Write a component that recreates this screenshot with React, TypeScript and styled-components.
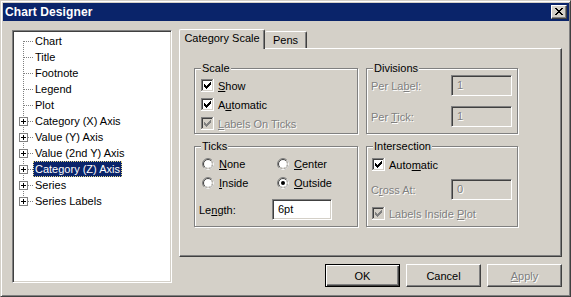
import React from "react";
import styled, { createGlobalStyle, css } from "styled-components";

const face = "#d4d0c8";
const shadow = "#808080";
const dark = "#404040";
const navy = "#0a246a";

const GlobalStyle = createGlobalStyle`
  html, body {
    margin: 0;
    padding: 0;
    background: ${face};
  }
  body {
    font-family: "Liberation Sans", Arial, sans-serif;
    font-size: 11px;
    color: #000;
  }
  * {
    box-sizing: border-box;
  }
`;

const disabledText = css`
  color: ${shadow};
  text-shadow: 1px 1px 0 #fff;
`;

const Window = styled.div`
  width: 571px;
  height: 297px;
  background: ${face};
  border: 1px solid;
  border-color: ${face} ${dark} ${dark} ${face};
  box-shadow: inset 1px 1px 0 #fff, inset -1px -1px 0 ${shadow};
  padding: 2px 1px 2px 2px;
  display: flex;
  flex-direction: column;
  overflow: hidden;
`;

const TitleBar = styled.div`
  height: 18px;
  background: ${navy};
  color: #fff;
  display: flex;
  align-items: center;
  justify-content: space-between;
  padding: 0 2px 0 2px;
`;

const Title = styled.span`
  font-weight: bold;
  font-size: 12px;
  letter-spacing: 0.1px;
`;

const CloseButton = styled.div`
  width: 16px;
  height: 14px;
  background: ${face};
  border: 1px solid;
  border-color: #fff ${dark} ${dark} #fff;
  box-shadow: inset -1px -1px 0 ${shadow};
  display: flex;
  align-items: center;
  justify-content: center;
  padding: 0 1px 1px 0;
`;

const Body = styled.div`
  display: flex;
  gap: 7px;
  padding: 8px 0 0 9px;
`;

const Tree = styled.div`
  margin-top: 1px;
  width: 160px;
  height: 253px;
  background: #fff;
  border: 1px solid;
  border-color: ${shadow} #fff #fff ${shadow};
  box-shadow: inset 1px 1px 0 ${dark}, inset -1px -1px 0 ${face};
  padding: 2px 1px;
`;

const TreeRow = styled.div`
  display: flex;
  height: 16px;
`;

const TreeLabel = styled.span<{ $selected?: boolean }>`
  line-height: 14px;
  padding: 0 1px;
  border: 1px dotted transparent;
  white-space: nowrap;
  ${(p) =>
    p.$selected &&
    css`
      background: ${navy};
      color: #fff;
      border-color: #e8dc8a;
    `}
`;

const RightColumn = styled.div`
  width: 383px;
  display: flex;
  flex-direction: column;
`;

const TabStrip = styled.div`
  height: 19px;
  display: flex;
  align-items: flex-end;
  position: relative;
  z-index: 1;
`;

const Tab = styled.div<{ $active?: boolean; $width: number }>`
  width: ${(p) => p.$width}px;
  background: ${face};
  border-top: 1px solid #fff;
  border-right: 1px solid ${dark};
  box-shadow: inset -1px 0 0 ${shadow};
  border-radius: 2px 2px 0 0;
  text-align: center;
  ${(p) =>
    p.$active
      ? css`
          height: 20px;
          margin-bottom: -1px;
          border-left: 1px solid #fff;
          line-height: 17px;
        `
      : css`
          height: 17px;
          line-height: 16px;
        `}
`;

const TabPanel = styled.div`
  height: 209px;
  border: 1px solid;
  border-color: #fff ${dark} ${dark} #fff;
  box-shadow: inset -1px -1px 0 ${shadow};
  padding: 13px 0 0 14px;
  display: grid;
  grid-template-columns: 164px 152px;
  grid-template-rows: 72px 87px;
  column-gap: 8px;
  row-gap: 6px;
  align-content: start;
`;

const Group = styled.fieldset<{ $top: number }>`
  margin: 0;
  min-width: 0;
  border: 1px solid ${shadow};
  box-shadow: 1px 1px 0 #fff, inset 1px 1px 0 #fff;
  padding: ${(p) => p.$top}px 4px 0 4px;
  display: flex;
  flex-direction: column;
`;

const Legend = styled.legend`
  margin-left: 2px;
  padding: 0 1px;
  line-height: 13px;
  background: ${face};
`;

const Stack = styled.div<{ $gap: number; $indent?: number }>`
  display: flex;
  flex-direction: column;
  gap: ${(p) => p.$gap}px;
  margin-left: ${(p) => p.$indent ?? 0}px;
`;

const OptionRow = styled.label<{ $disabled?: boolean }>`
  display: flex;
  align-items: center;
  gap: 4px;
  height: 13px;
  white-space: nowrap;
  ${(p) => p.$disabled && disabledText}
`;

const RadioGrid = styled.div`
  display: grid;
  grid-template-columns: 75px 75px;
  row-gap: 7px;
  margin-left: 3px;
`;

const RadioRow = styled.label`
  display: flex;
  align-items: center;
  gap: 5px;
  height: 12px;
  white-space: nowrap;
`;

const FieldRow = styled.div<{ $labelWidth?: number }>`
  display: flex;
  align-items: center;
  height: 21px;
  justify-content: ${(p) => (p.$labelWidth ? "flex-start" : "space-between")};
  padding-right: ${(p) => (p.$labelWidth ? 0 : 1)}px;
  & > span:first-child {
    width: ${(p) => (p.$labelWidth ? `${p.$labelWidth}px` : "auto")};
  }
`;

const FieldLabel = styled.span<{ $disabled?: boolean }>`
  ${(p) => p.$disabled && disabledText}
`;

const TextBox = styled.input<{ $width: number }>`
  width: ${(p) => p.$width}px;
  height: 21px;
  margin: 0;
  font: 11px "Liberation Sans", Arial, sans-serif;
  color: #000;
  background: #fff;
  border: 1px solid;
  border-color: ${shadow} #fff #fff ${shadow};
  box-shadow: inset 1px 1px 0 ${dark}, inset -1px -1px 0 ${face};
  padding: 0 0 1px 5px;
  outline: none;
  &:disabled {
    background: ${face};
    ${disabledText}
    opacity: 1;
  }
`;

const ButtonRow = styled.div`
  display: flex;
  justify-content: flex-end;
  gap: 6px;
  margin-top: 7px;
`;

const Button = styled.button<{ $default?: boolean }>`
  width: 75px;
  height: 23px;
  padding: 0;
  font: 11px "Liberation Sans", Arial, sans-serif;
  color: #000;
  background: ${face};
  border: 1px solid;
  border-color: #fff ${dark} ${dark} #fff;
  box-shadow: inset -1px -1px 0 ${shadow};
  ${(p) =>
    p.$default &&
    css`
      border-color: #000;
      box-shadow: inset 1px 1px 0 #fff, inset -1px -1px 0 ${dark},
        inset -2px -2px 0 ${shadow};
    `}
  &:disabled {
    ${disabledText}
  }
`;

const CloseGlyph = () => (
  <svg width="8" height="7" viewBox="0 0 8 7">
    <path
      d="M0 0h2v1H0zM6 0h2v1H6zM1 1h2v1H1zM5 1h2v1H5zM2 2h4v1H2zM3 3h2v1H3zM2 4h4v1H2zM1 5h2v1H1zM5 5h2v1H5zM0 6h2v1H0zM6 6h2v1H6z"
      fill="#000"
    />
  </svg>
);

const Connector = ({
  first,
  last,
  expandable,
}: {
  first?: boolean;
  last?: boolean;
  expandable?: boolean;
}) => (
  <svg width="19" height="16" viewBox="0 0 19 16" shapeRendering="crispEdges">
    <line
      x1="9.5"
      y1={first ? 8 : 0}
      x2="9.5"
      y2={last ? 9 : 16}
      stroke={shadow}
      strokeDasharray="1 1"
    />
    <line
      x1={expandable ? 14 : 10}
      y1="8.5"
      x2="19"
      y2="8.5"
      stroke={shadow}
      strokeDasharray="1 1"
    />
    {expandable && (
      <>
        <rect x="5.5" y="4.5" width="8" height="8" fill="#fff" stroke={shadow} />
        <path d="M7 8h5v1H7zM9 6h1v5H9z" fill="#000" />
      </>
    )}
  </svg>
);

const CheckBox = ({ checked, disabled }: { checked?: boolean; disabled?: boolean }) => (
  <svg width="13" height="13" viewBox="0 0 13 13" shapeRendering="crispEdges">
    <rect x="2" y="2" width="9" height="9" fill={disabled ? face : "#fff"} />
    <path d="M0.5 12V0.5H12" stroke={shadow} fill="none" />
    <path d="M1.5 11V1.5H11" stroke={dark} fill="none" />
    <path d="M0 12.5H12.5V0" stroke="#fff" fill="none" />
    <path d="M1 11.5H11.5V1" stroke={face} fill="none" />
    {checked && (
      <path
        d="M3 5h1v3H3zM4 6h1v3H4zM5 7h1v3H5zM6 6h1v3H6zM7 5h1v3H7zM8 4h1v3H8zM9 3h1v3H9z"
        fill={disabled ? shadow : "#000"}
      />
    )}
  </svg>
);

const Radio = ({ checked }: { checked?: boolean }) => (
  <svg width="12" height="12" viewBox="0 0 12 12">
    <circle cx="6" cy="6" r="5.5" fill="none" stroke={shadow} />
    <path d="M9.89 2.11A5.5 5.5 0 0 1 2.11 9.89" fill="none" stroke="#fff" />
    <circle cx="6" cy="6" r="4.5" fill="#fff" stroke={dark} />
    <path d="M9.18 2.82A4.5 4.5 0 0 1 2.82 9.18" fill="none" stroke={face} />
    {checked && <circle cx="6" cy="6" r="2" fill="#000" />}
  </svg>
);

const treeItems = [
  { label: "Chart" },
  { label: "Title" },
  { label: "Footnote" },
  { label: "Legend" },
  { label: "Plot" },
  { label: "Category (X) Axis", expandable: true },
  { label: "Value (Y) Axis", expandable: true },
  { label: "Value (2nd Y) Axis", expandable: true },
  { label: "Category (Z) Axis", expandable: true, selected: true },
  { label: "Series", expandable: true },
  { label: "Series Labels", expandable: true },
];

export default function App() {
  return (
    <>
      <GlobalStyle />
      <Window>
        <TitleBar>
          <Title>Chart Designer</Title>
          <CloseButton>
            <CloseGlyph />
          </CloseButton>
        </TitleBar>
        <Body>
          <Tree>
            {treeItems.map((item, i) => (
              <TreeRow key={item.label}>
                <Connector
                  first={i === 0}
                  last={i === treeItems.length - 1}
                  expandable={item.expandable}
                />
                <TreeLabel $selected={item.selected}>{item.label}</TreeLabel>
              </TreeRow>
            ))}
          </Tree>
          <RightColumn>
            <TabStrip>
              <Tab $active $width={86}>
                Category Scale
              </Tab>
              <Tab $width={42}>Pens</Tab>
            </TabStrip>
            <TabPanel>
              <Group $top={4}>
                <Legend>Scale</Legend>
                <Stack $gap={6} $indent={2}>
                  <OptionRow>
                    <CheckBox checked />
                    <span>
                      <u>S</u>how
                    </span>
                  </OptionRow>
                  <OptionRow>
                    <CheckBox checked />
                    <span>
                      A<u>u</u>tomatic
                    </span>
                  </OptionRow>
                  <OptionRow $disabled>
                    <CheckBox checked disabled />
                    <span>
                      <u>L</u>abels On Ticks
                    </span>
                  </OptionRow>
                </Stack>
              </Group>
              <Group $top={0}>
                <Legend>Divisions</Legend>
                <Stack $gap={10}>
                  <FieldRow>
                    <FieldLabel $disabled>
                      Per La<u>b</u>el:
                    </FieldLabel>
                    <TextBox $width={61} disabled defaultValue="1" />
                  </FieldRow>
                  <FieldRow>
                    <FieldLabel $disabled>
                      Per <u>T</u>ick:
                    </FieldLabel>
                    <TextBox $width={61} disabled defaultValue="1" />
                  </FieldRow>
                </Stack>
              </Group>
              <Group $top={5}>
                <Legend>Ticks</Legend>
                <RadioGrid>
                  <RadioRow>
                    <Radio />
                    <span>
                      <u>N</u>one
                    </span>
                  </RadioRow>
                  <RadioRow>
                    <Radio />
                    <span>
                      <u>C</u>enter
                    </span>
                  </RadioRow>
                  <RadioRow>
                    <Radio />
                    <span>
                      <u>I</u>nside
                    </span>
                  </RadioRow>
                  <RadioRow>
                    <Radio checked />
                    <span>
                      <u>O</u>utside
                    </span>
                  </RadioRow>
                </RadioGrid>
                <FieldRow $labelWidth={73} style={{ marginTop: 10 }}>
                  <FieldLabel>
                    Le<u>n</u>gth:
                  </FieldLabel>
                  <TextBox $width={60} readOnly defaultValue="6pt" />
                </FieldRow>
              </Group>
              <Group $top={5}>
                <Legend>Intersection</Legend>
                <OptionRow style={{ marginLeft: 1 }}>
                  <CheckBox checked />
                  <span>
                    Auto<u>m</u>atic
                  </span>
                </OptionRow>
                <FieldRow style={{ marginTop: 8 }}>
                  <FieldLabel $disabled>
                    C<u>r</u>oss At:
                  </FieldLabel>
                  <TextBox $width={61} disabled defaultValue="0" />
                </FieldRow>
                <OptionRow $disabled style={{ marginTop: 7, marginLeft: 1 }}>
                  <CheckBox checked disabled />
                  <span>
                    Labels Inside <u>P</u>lot
                  </span>
                </OptionRow>
              </Group>
            </TabPanel>
            <ButtonRow>
              <Button $default>OK</Button>
              <Button>Cancel</Button>
              <Button disabled>
                <u>A</u>pply
              </Button>
            </ButtonRow>
          </RightColumn>
        </Body>
      </Window>
    </>
  );
}
